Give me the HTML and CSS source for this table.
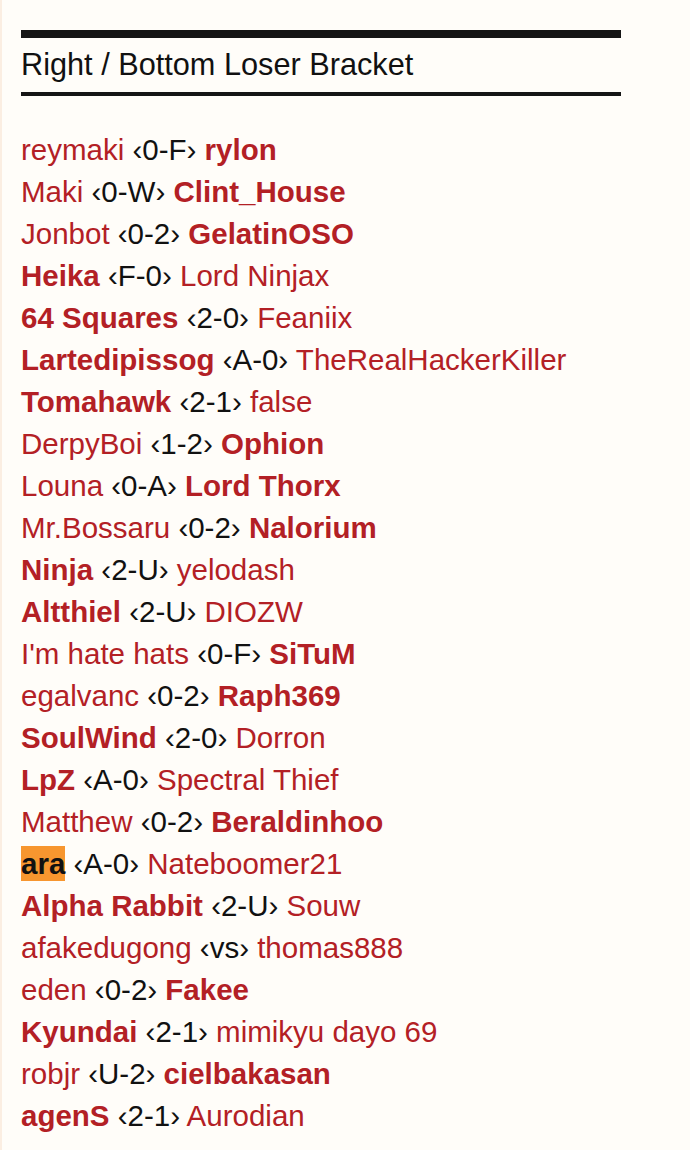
FILE: index.html
```html
<!DOCTYPE html>
<html>
<head>
<meta charset="utf-8">
<link rel="stylesheet" href="styles.css">
</head>
<body>
<div class="page">
  <div class="section">
    <h2 class="title">Right / Bottom Loser Bracket</h2>
    <ul class="matches">
      <li><span class="p">reymaki</span> <span class="s">‹0-F›</span> <b class="p">rylon</b></li>
      <li><span class="p">Maki</span> <span class="s">‹0-W›</span> <b class="p">Clint_House</b></li>
      <li><span class="p">Jonbot</span> <span class="s">‹0-2›</span> <b class="p">GelatinOSO</b></li>
      <li><b class="p">Heika</b> <span class="s">‹F-0›</span> <span class="p">Lord Ninjax</span></li>
      <li><b class="p">64 Squares</b> <span class="s">‹2-0›</span> <span class="p">Feaniix</span></li>
      <li><b class="p">Lartedipissog</b> <span class="s">‹A-0›</span> <span class="p">TheRealHackerKiller</span></li>
      <li><b class="p">Tomahawk</b> <span class="s">‹2-1›</span> <span class="p">false</span></li>
      <li><span class="p">DerpyBoi</span> <span class="s">‹1-2›</span> <b class="p">Ophion</b></li>
      <li><span class="p">Louna</span> <span class="s">‹0-A›</span> <b class="p">Lord Thorx</b></li>
      <li><span class="p">Mr.Bossaru</span> <span class="s">‹0-2›</span> <b class="p">Nalorium</b></li>
      <li><b class="p">Ninja</b> <span class="s">‹2-U›</span> <span class="p">yelodash</span></li>
      <li><b class="p">Altthiel</b> <span class="s">‹2-U›</span> <span class="p">DIOZW</span></li>
      <li><span class="p">I'm hate hats</span> <span class="s">‹0-F›</span> <b class="p">SiTuM</b></li>
      <li><span class="p">egalvanc</span> <span class="s">‹0-2›</span> <b class="p">Raph369</b></li>
      <li><b class="p">SoulWind</b> <span class="s">‹2-0›</span> <span class="p">Dorron</span></li>
      <li><b class="p">LpZ</b> <span class="s">‹A-0›</span> <span class="p">Spectral Thief</span></li>
      <li><span class="p">Matthew</span> <span class="s">‹0-2›</span> <b class="p">Beraldinhoo</b></li>
      <li><b class="p hl">ara</b> <span class="s">‹A-0›</span> <span class="p">Nateboomer21</span></li>
      <li><b class="p">Alpha Rabbit</b> <span class="s">‹2-U›</span> <span class="p">Souw</span></li>
      <li><span class="p">afakedugong</span> <span class="s">‹vs›</span> <span class="p">thomas888</span></li>
      <li><span class="p">eden</span> <span class="s">‹0-2›</span> <b class="p">Fakee</b></li>
      <li><b class="p">Kyundai</b> <span class="s">‹2-1›</span> <span class="p">mimikyu dayo 69</span></li>
      <li><span class="p">robjr</span> <span class="s">‹U-2›</span> <b class="p">cielbakasan</b></li>
      <li><b class="p">agenS</b> <span class="s">‹2-1›</span> <span class="p">Aurodian</span></li>
    </ul>
  </div>
</div>
</body>
</html>
```
FILE: styles.css
```css
html, body {
  margin: 0;
  padding: 0;
  background: #fffdf9;
}
body {
  font-family: "Liberation Sans", Arial, sans-serif;
  color: #111;
  border-left: 2px solid #fbeee2;
  min-height: 1150px;
  box-sizing: border-box;
}
.page {
  padding: 30px 0 0 19px;
}
.section {
  width: 600px;
}
.title {
  margin: 0;
  border-top: 8px solid #151515;
  border-bottom: 4px solid #151515;
  font-weight: normal;
  font-size: 30.7px;
  line-height: 54px;
  color: #111;
}
.matches {
  list-style: none;
  margin: 0;
  padding: 33px 0 0 0;
}
.matches li {
  font-size: 29.5px;
  line-height: 42px;
  white-space: nowrap;
}
.p {
  color: #b32025;
}
b.p {
  font-weight: bold;
}
.s {
  color: #111;
}
.hl {
  background: #f7962f;
  color: #111;
  padding: 1px 0;
}
```
